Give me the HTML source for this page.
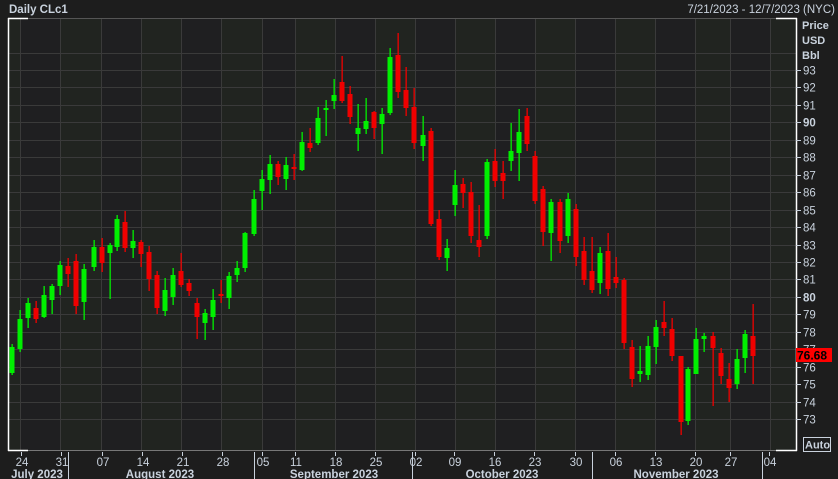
<!DOCTYPE html>
<html><head><meta charset="utf-8"><style>
html,body{margin:0;padding:0;background:#1c1c1c;width:838px;height:479px;overflow:hidden}
svg{display:block}
text{font-family:"Liberation Sans",sans-serif}
</style></head><body>
<svg id="s" width="838" height="479" xmlns="http://www.w3.org/2000/svg">
<rect width="838" height="479" fill="#1d1d1d"/>
<text x="9" y="13" font-size="11.5" font-weight="bold" fill="#c9d2dd">Daily CLc1</text>
<text x="835" y="13" font-size="11.5" fill="#c9d2dd" text-anchor="end">7/21/2023 - 12/7/2023 (NYC)</text>
<rect x="8" y="18" width="788" height="432" fill="#1f1f21"/>
<g id="bands"></g>
<g id="grid" stroke="#3a3a3a" stroke-width="1"></g>
<g id="candles"></g>
<g stroke="#fff" stroke-width="1.5">
<line x1="8.5" y1="18" x2="8.5" y2="451"/>
<line x1="8" y1="18.5" x2="28" y2="18.5"/>
<line x1="8" y1="450.5" x2="28" y2="450.5"/>
<line x1="796.5" y1="18" x2="796.5" y2="451"/>
<line x1="776" y1="18.5" x2="797" y2="18.5"/>
<line x1="776" y1="450.5" x2="797" y2="450.5"/>
</g>
<line x1="28" y1="450.5" x2="776" y2="450.5" stroke="#777"/>
<line x1="28" y1="18.5" x2="776" y2="18.5" stroke="#555"/>
<text x="802" y="29" font-size="11" font-weight="bold" fill="#c9d2dd">Price</text>
<text x="802" y="44" font-size="11" font-weight="bold" fill="#c9d2dd">USD</text>
<text x="802" y="59" font-size="11" font-weight="bold" fill="#c9d2dd">Bbl</text>
<g id="yax"></g>
<rect x="796" y="348" width="36" height="14" fill="#ff0000"/>
<text x="797" y="359.5" font-size="12" font-weight="bold" fill="#000">76.68</text>
<rect x="803.5" y="437.5" width="27" height="14" fill="none" stroke="#c9d2dd"/>
<text x="805" y="448.5" font-size="11" font-weight="bold" fill="#c9d2dd">Auto</text>
<g id="xax"></g>
</svg>
<script>
var NS="http://www.w3.org/2000/svg";
function el(p,t,a,txt){var e=document.createElementNS(NS,t);for(var k in a)e.setAttribute(k,a[k]);if(txt)e.textContent=txt;document.getElementById(p).appendChild(e);return e;}
function y(p){return 419-(p-73)*17.45;}
var vx=[20,60,101,141,181,221,262,295,335,375,415,455,495,535,575,615,655,695,730,770];
var edges=[8].concat(vx).concat([796]);
for(var i=0;i<edges.length-1;i++){if(i%2==0)el("bands","rect",{x:edges[i],y:19,width:edges[i+1]-edges[i],height:431,fill:"#212420"});}
for(var p=73;p<=94;p++){var yy=Math.round(y(p))+0.5;el("grid","line",{x1:8,y1:yy,x2:796,y2:yy});}
vx.forEach(function(x){el("grid","line",{x1:x+0.5,y1:19,x2:x+0.5,y2:450});});
for(var p=73;p<=93;p++){var yy=Math.round(y(p));el("yax","line",{x1:796,y1:yy+0.5,x2:801,y2:yy+0.5,stroke:"#c9d2dd"});
 el("yax","text",{x:803,y:yy+4.5,"font-size":11.5,"font-weight":(p%10==0?"bold":"normal"),fill:"#c9d2dd"},String(p));}
var days=[[22,"24"],[62,"31"],[103,"07"],[143,"14"],[183,"21"],[223,"28"],[263,"05"],[296,"11"],[336,"18"],[376,"25"],[416,"02"],[455,"09"],[495,"16"],[535,"23"],[576,"30"],[616,"06"],[656,"13"],[696,"20"],[731,"27"],[770,"04"]];
days.forEach(function(d){el("xax","line",{x1:d[0]-0.5,y1:452,x2:d[0]-0.5,y2:456,stroke:"#c9d2dd"});el("xax","text",{x:d[0],y:466,"font-size":11.5,fill:"#c9d2dd","text-anchor":"middle"},d[1]);});
[68,254,412,592,762].forEach(function(x){el("xax","line",{x1:x+0.5,y1:452,x2:x+0.5,y2:479,stroke:"#c9d2dd"});});
[[37,"July 2023"],[160,"August 2023"],[334,"September 2023"],[502,"October 2023"],[676,"November 2023"]].forEach(function(m){el("xax","text",{x:m[0],y:478,"font-size":11.5,"font-weight":"bold",fill:"#c9d2dd","text-anchor":"middle"},m[1]);});
// x, color(g/r), bodyTop, bodyBottom, wickTop, wickBottom
var C=[[12,"g",347,373,344,375],[20,"g",319,349,310,352],[28,"g",303,318,298,328],[36,"r",308,319,301,323],[44,"g",295,317,286,318],[52,"g",286,300,284,314],[60,"g",265,286,261,295],[68,"r",266,274,258,287],[76,"r",261,306,254,314],[84,"g",269,302,264,320],[94,"g",247,267,240,271],[102,"r",247,263,238,272],[110,"g",245,253,243,299],[117,"g",219,247,215,251],[125,"r",222,248,211,252],[133,"g",241,248,230,258],[141,"r",242,254,240,267],[149,"r",252,279,246,291],[157,"r",275,308,271,314],[165,"g",290,311,278,316],[173,"g",275,297,268,305],[181,"r",271,285,253,287],[189,"r",283,291,279,296],[197,"r",303,317,298,339],[205,"g",313,323,309,340],[213,"g",300,317,289,330],[221,"r",294,296,280,303],[229,"g",276,298,272,309],[237,"g",268,275,261,282],[245,"g",233,268,232,272],[254,"g",199,234,190,236],[262,"g",179,191,170,210],[270,"g",164,180,155,194],[278,"r",164,177,161,185],[286,"g",165,179,157,190],[294,"r",167,169,154,180],[302,"g",142,170,132,171],[310,"r",143,148,128,152],[318,"g",118,143,107,145],[326,"g",108,110,100,136],[334,"g",95,101,79,109],[342,"r",82,101,56,103],[350,"r",94,117,86,124],[358,"g",128,134,104,151],[366,"g",121,129,98,134],[374,"r",112,128,111,139],[382,"g",114,124,108,154],[390,"g",57,113,48,115],[398,"r",55,92,33,98],[406,"r",90,108,67,116],[414,"r",107,143,88,149],[423,"g",135,146,116,161],[431,"r",131,224,128,226],[439,"r",219,257,210,260],[447,"g",248,258,239,271],[455,"g",185,205,170,216],[463,"r",184,193,178,208],[471,"r",192,236,182,243],[479,"r",240,247,205,257],[487,"g",162,236,159,239],[495,"r",161,181,149,187],[503,"r",173,181,161,199],[511,"g",151,161,123,171],[519,"g",132,153,109,181],[527,"r",116,144,108,151],[535,"r",156,201,151,204],[543,"r",189,232,186,246],[551,"g",202,233,199,261],[560,"r",202,241,199,253],[568,"g",199,236,193,243],[576,"r",209,257,204,266],[584,"r",251,280,237,285],[592,"r",271,290,237,293],[600,"g",253,283,247,294],[608,"r",251,289,233,296],[616,"r",277,283,257,288],[624,"r",280,343,278,349],[632,"r",347,379,340,387],[640,"g",371,374,346,382],[648,"g",346,375,336,380],[656,"g",327,347,320,364],[664,"r",322,328,301,336],[672,"r",329,356,318,361],[681,"r",356,422,356,435],[688,"g",369,421,367,425],[696,"g",339,374,328,374],[704,"g",336,339,333,352],[713,"r",336,348,332,406],[721,"r",353,376,348,384],[729,"r",379,388,363,402],[737,"g",359,384,349,389],[745,"g",334,358,330,373],[753,"r",336,356,304,384]];
C.forEach(function(c){var col=c[1]=="g"?"#00f000":"#f00000";
 el("candles","rect",{x:c[0]-0.5,y:c[4],width:1.3,height:c[5]-c[4],fill:col});
 el("candles","rect",{x:c[0]-2.5,y:c[2],width:5,height:Math.max(2,c[3]-c[2]),fill:col});});
</script>
</body></html>
